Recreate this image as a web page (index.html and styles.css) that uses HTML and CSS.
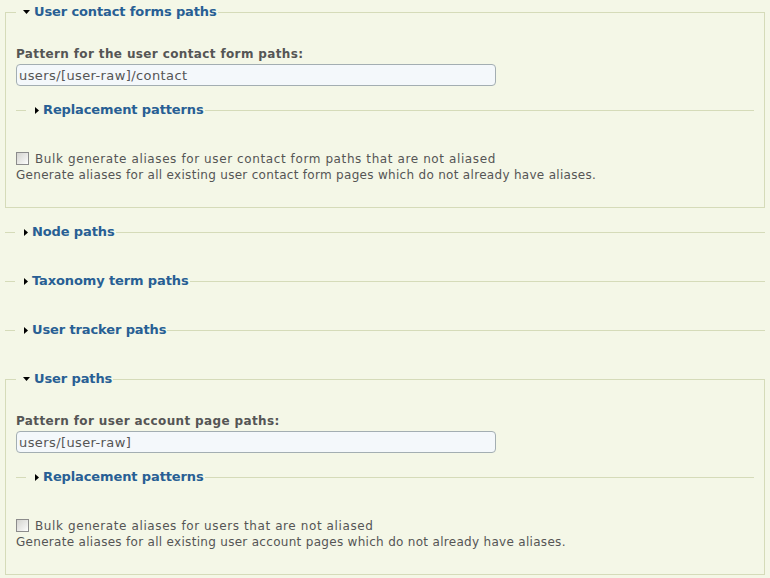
FILE: index.html
```html
<!DOCTYPE html>
<html>
<head>
<meta charset="utf-8">
<link rel="stylesheet" href="styles.css">
</head>
<body>
<div class="page">
  <fieldset class="group open">
    <legend><a class="toggle" href="#"><svg class="arrow down" width="7" height="4" viewBox="0 0 7 4"><path d="M0 0H7L3.5 4Z"/></svg>User contact forms paths</a></legend>
    <div class="form-item">
      <label class="field-label" for="p1">Pattern for the user contact form paths:</label>
      <input class="form-text" id="p1" type="text" value="users/[user-raw]/contact">
    </div>
    <fieldset class="group collapsed">
      <legend><a class="toggle" href="#"><svg class="arrow right" width="4" height="7" viewBox="0 0 4 7"><path d="M0 0V7L4 3.5Z"/></svg>Replacement patterns</a></legend>
    </fieldset>
    <div class="form-item">
      <label class="option"><input class="check" type="checkbox">Bulk generate aliases for user contact form paths that are not aliased</label>
      <div class="description">Generate aliases for all existing user contact form pages which do not already have aliases.</div>
    </div>
  </fieldset>

  <fieldset class="group collapsed">
    <legend><a class="toggle" href="#"><svg class="arrow right" width="4" height="7" viewBox="0 0 4 7"><path d="M0 0V7L4 3.5Z"/></svg>Node paths</a></legend>
  </fieldset>

  <fieldset class="group collapsed">
    <legend><a class="toggle" href="#"><svg class="arrow right" width="4" height="7" viewBox="0 0 4 7"><path d="M0 0V7L4 3.5Z"/></svg>Taxonomy term paths</a></legend>
  </fieldset>

  <fieldset class="group collapsed">
    <legend><a class="toggle" href="#"><svg class="arrow right" width="4" height="7" viewBox="0 0 4 7"><path d="M0 0V7L4 3.5Z"/></svg>User tracker paths</a></legend>
  </fieldset>

  <fieldset class="group open">
    <legend><a class="toggle" href="#"><svg class="arrow down" width="7" height="4" viewBox="0 0 7 4"><path d="M0 0H7L3.5 4Z"/></svg>User paths</a></legend>
    <div class="form-item">
      <label class="field-label" for="p2">Pattern for user account page paths:</label>
      <input class="form-text" id="p2" type="text" value="users/[user-raw]">
    </div>
    <fieldset class="group collapsed">
      <legend><a class="toggle" href="#"><svg class="arrow right" width="4" height="7" viewBox="0 0 4 7"><path d="M0 0V7L4 3.5Z"/></svg>Replacement patterns</a></legend>
    </fieldset>
    <div class="form-item">
      <label class="option"><input class="check" type="checkbox">Bulk generate aliases for users that are not aliased</label>
      <div class="description">Generate aliases for all existing user account pages which do not already have aliases.</div>
    </div>
  </fieldset>
</div>
</body>
</html>
```

FILE: styles.css
```css
html, body {
  margin: 0;
  padding: 0;
  background: #f4f7e7;
}

body {
  font-family: "DejaVu Sans", Verdana, sans-serif;
  font-size: 12px;
  line-height: 16px;
  color: #555;
}

.page {
  padding: 4px 5px 0;
}

fieldset.group {
  margin: 0 0 16px;
  padding: 26px 10px 24px;
  border: 1px solid #d5dbb9;
  min-width: 0;
}

fieldset.collapsed {
  padding: 0 10px 17px;
  border-left: 0;
  border-right: 0;
  border-bottom: 0;
}

fieldset.group fieldset.collapsed {
  margin: 16px 0;
}

legend {
  padding: 0 1px;
  font-size: 13px;
  font-weight: bold;
  line-height: 16px;
  letter-spacing: -0.12px;
}

.toggle {
  color: #285f94;
  text-decoration: none;
}

.arrow {
  fill: #000;
  display: inline-block;
}

.arrow.down {
  margin: 0 4px 0 6px;
  vertical-align: 2px;
}

.arrow.right {
  margin: 0 4px 0 8px;
  vertical-align: 0;
}

.field-label {
  display: block;
  font-weight: bold;
  letter-spacing: 0.37px;
}

.form-text {
  display: block;
  box-sizing: border-box;
  width: 480px;
  height: 22px;
  margin: 2px 0 0;
  padding: 0 2px;
  border: 1px solid #a3aeb2;
  border-radius: 4px;
  background: #f4f8fb;
  font-family: "DejaVu Sans", Verdana, sans-serif;
  font-size: 13px;
  letter-spacing: 0.4px;
  color: #555;
}

.option {
  display: block;
  letter-spacing: 0.6px;
}

.check {
  -webkit-appearance: none;
  appearance: none;
  box-sizing: border-box;
  width: 13px;
  height: 13px;
  margin: 1px 6px 0 0;
  vertical-align: top;
  border: 1px solid #8c8c8c;
  background: linear-gradient(135deg, #d4d4d0 0%, #f0f0ee 70%, #ffffff 100%);
}

.description {
  font-size: 12px;
  letter-spacing: 0.3px;
}
```
